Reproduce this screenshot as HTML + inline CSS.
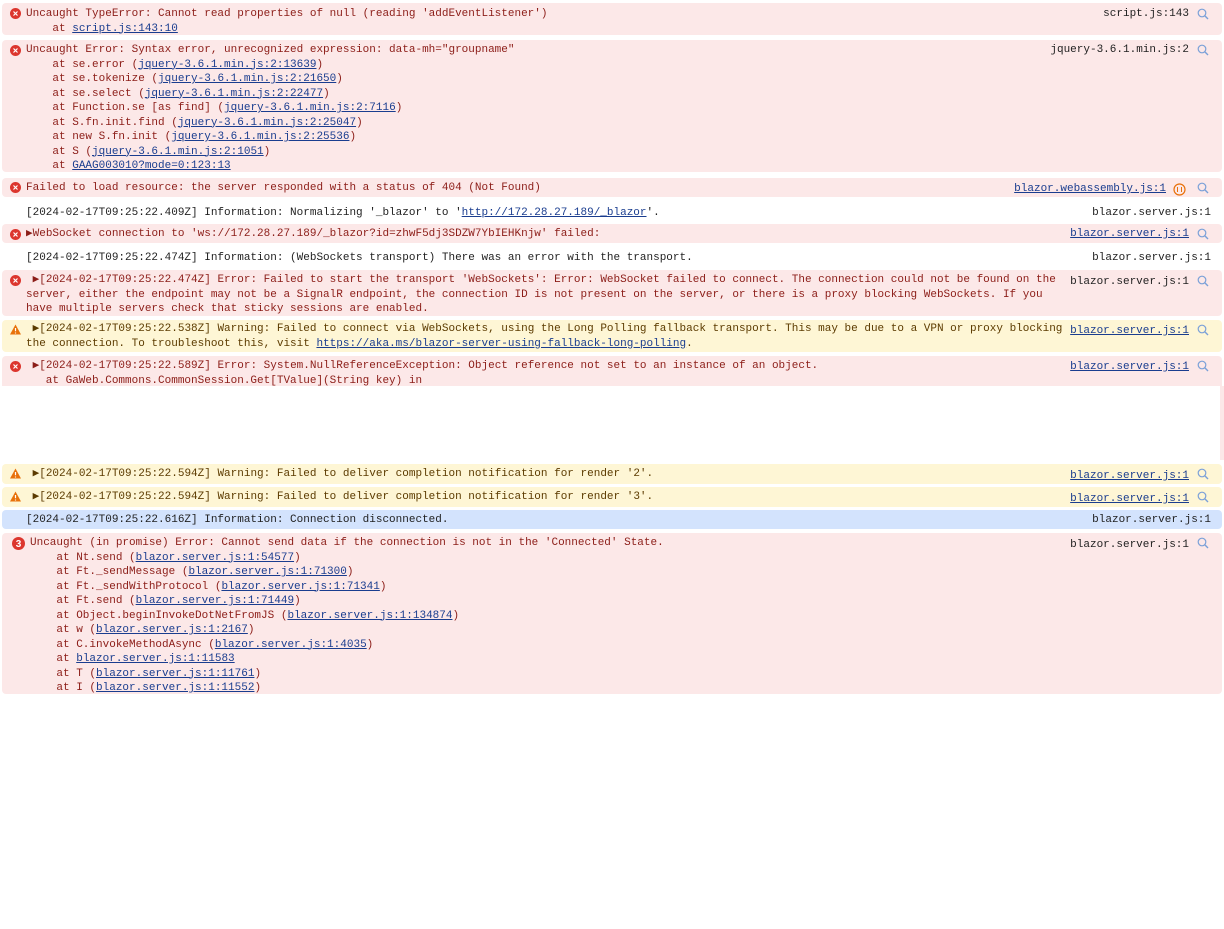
<!DOCTYPE html>
<html><head><meta charset="utf-8"><style>
body{margin:0;width:1224px;height:929px;background:#fff;position:relative;overflow:hidden;font-family:"Liberation Mono",monospace;font-size:11px;}
.r{position:absolute;left:2px;width:1220px;border-radius:4px;}
.e{background:#fce8e8;color:#8c1d18;}
.w{background:#fef6d5;color:#5c3b00;}
.b{background:#d3e3fd;color:#1f1f1f;}
.i{color:#1f1f1f;}
.t{position:absolute;left:24px;top:0;white-space:pre;line-height:14.5px;margin-top:1px}
.s{position:absolute;right:33px;white-space:pre;line-height:14.5px;color:#1f1f1f;margin-top:1px}
.s.u{text-decoration:underline;color:#1a3d8f}
.s.n{right:11px;color:#1f1f1f;text-decoration:none}
a{color:#1a3d8f;text-decoration:underline}
.ic{position:absolute;left:8px;width:11px;height:11px;margin-top:1px}
.mg{position:absolute;right:13px;width:12px;height:12px;margin-top:1px}
</style></head><body>
<svg width="0" height="0" style="position:absolute"><defs>
<g id="err"><circle cx="5.5" cy="5.5" r="5.5" fill="#dc362e"/><path d="M3.5 3.5l4 4M7.5 3.5l-4 4" stroke="#fff" stroke-width="1.2"/></g>
<g id="warn"><path d="M5.5 0.5L11 10.5H0z" fill="#e8710a"/><path d="M5.5 4v3.3M5.5 8.5v1" stroke="#fff" stroke-width="1.2"/></g>
<g id="mag"><circle cx="5" cy="5" r="3.8" fill="none" stroke="#7aa0d8" stroke-width="1.2"/><path d="M7.8 7.8L11 11" stroke="#7aa0d8" stroke-width="1.4"/></g>
</defs></svg>

<div class="r e" style="top:3px;height:32px">
<svg class="ic" style="top:4px"><use href="#err"/></svg>
<div class="t" style="top:3px">Uncaught TypeError: Cannot read properties of null (reading 'addEventListener')
    at <a>script.js:143:10</a></div>
<div class="s" style="top:3px">script.js:143</div><svg class="mg" style="top:4px"><use href="#mag"/></svg></div>

<div class="r e" style="top:40px;height:132px">
<svg class="ic" style="top:4px"><use href="#err"/></svg>
<div class="t" style="top:2px">Uncaught Error: Syntax error, unrecognized expression: data-mh="groupname"
    at se.error (<a>jquery-3.6.1.min.js:2:13639</a>)
    at se.tokenize (<a>jquery-3.6.1.min.js:2:21650</a>)
    at se.select (<a>jquery-3.6.1.min.js:2:22477</a>)
    at Function.se [as find] (<a>jquery-3.6.1.min.js:2:7116</a>)
    at S.fn.init.find (<a>jquery-3.6.1.min.js:2:25047</a>)
    at new S.fn.init (<a>jquery-3.6.1.min.js:2:25536</a>)
    at S (<a>jquery-3.6.1.min.js:2:1051</a>)
    at <a>GAAG003010?mode=0:123:13</a></div>
<div class="s" style="top:2px">jquery-3.6.1.min.js:2</div><svg class="mg" style="top:3px"><use href="#mag"/></svg></div>

<div class="r e" style="top:178px;height:19px">
<svg class="ic" style="top:3px"><use href="#err"/></svg>
<div class="t" style="top:2px">Failed to load resource: the server responded with a status of 404 (Not Found)</div>
<div class="s u" style="top:3px;right:56px">blazor.webassembly.js:1</div>
<svg style="position:absolute;right:36px;top:5px" width="13" height="13"><circle cx="6.5" cy="6.5" r="5.5" fill="none" stroke="#e8710a" stroke-width="1.2"/><path d="M4.5 4v5M8.5 4v5" stroke="#e8710a" stroke-width="1"/></svg>
<svg class="mg" style="top:3px"><use href="#mag"/></svg></div>

<div class="r i" style="top:202px;height:20px">
<div class="t" style="top:3px">[2024-02-17T09:25:22.409Z] Information: Normalizing '_blazor' to '<a>http://172.28.27.189/_blazor</a>'.</div>
<div class="s n" style="top:3px">blazor.server.js:1</div></div>

<div class="r e" style="top:224px;height:19px">
<svg class="ic" style="top:4px"><use href="#err"/></svg>
<div class="t" style="top:2px">▶WebSocket connection to 'ws://172.28.27.189/_blazor?id=zhwF5dj3SDZW7YbIEHKnjw' failed:</div>
<div class="s u" style="top:2px">blazor.server.js:1</div><svg class="mg" style="top:3px"><use href="#mag"/></svg></div>

<div class="r i" style="top:247px;height:20px">
<div class="t" style="top:3px">[2024-02-17T09:25:22.474Z] Information: (WebSockets transport) There was an error with the transport.</div>
<div class="s n" style="top:3px">blazor.server.js:1</div></div>

<div class="r e" style="top:270px;height:46px">
<svg class="ic" style="top:4px"><use href="#err"/></svg>
<div class="t" style="top:2px"> ▶[2024-02-17T09:25:22.474Z] Error: Failed to start the transport 'WebSockets': Error: WebSocket failed to connect. The connection could not be found on the
server, either the endpoint may not be a SignalR endpoint, the connection ID is not present on the server, or there is a proxy blocking WebSockets. If you
have multiple servers check that sticky sessions are enabled.</div>
<div class="s" style="top:4px;background:#fce8e8;padding-left:6px">blazor.server.js:1</div><svg class="mg" style="top:4px"><use href="#mag"/></svg></div>

<div class="r w" style="top:320px;height:32px">
<svg class="ic" style="top:3px"><use href="#warn"/></svg>
<div class="t" style="top:1px"> ▶[2024-02-17T09:25:22.538Z] Warning: Failed to connect via WebSockets, using the Long Polling fallback transport. This may be due to a VPN or proxy blocking
the connection. To troubleshoot this, visit <a>https://aka.ms/blazor-server-using-fallback-long-polling</a>.</div>
<div class="s u" style="top:3px;background:#fef6d5;padding-left:6px">blazor.server.js:1</div><svg class="mg" style="top:3px"><use href="#mag"/></svg></div>

<div class="r e" style="top:356px;height:30px;border-radius:4px 4px 0 0">
<svg class="ic" style="top:4px"><use href="#err"/></svg>
<div class="t" style="top:2px"> ▶[2024-02-17T09:25:22.589Z] Error: System.NullReferenceException: Object reference not set to an instance of an object.
   at GaWeb.Commons.CommonSession.Get[TValue](String key) in</div>
<div class="s u" style="top:3px">blazor.server.js:1</div><svg class="mg" style="top:3px"><use href="#mag"/></svg></div>
<div style="position:absolute;left:1220px;top:386px;width:4px;height:74px;background:#fce8e8"></div>

<div class="r w" style="top:464px;height:20px">
<svg class="ic" style="top:3px"><use href="#warn"/></svg>
<div class="t" style="top:2px"> ▶[2024-02-17T09:25:22.594Z] Warning: Failed to deliver completion notification for render '2'.</div>
<div class="s u" style="top:4px">blazor.server.js:1</div><svg class="mg" style="top:3px"><use href="#mag"/></svg></div>

<div class="r w" style="top:487px;height:20px">
<svg class="ic" style="top:3px"><use href="#warn"/></svg>
<div class="t" style="top:2px"> ▶[2024-02-17T09:25:22.594Z] Warning: Failed to deliver completion notification for render '3'.</div>
<div class="s u" style="top:4px">blazor.server.js:1</div><svg class="mg" style="top:3px"><use href="#mag"/></svg></div>

<div class="r b" style="top:510px;height:19px">
<div class="t" style="top:2px">[2024-02-17T09:25:22.616Z] Information: Connection disconnected.</div>
<div class="s n" style="top:2px">blazor.server.js:1</div></div>

<div class="r e" style="top:533px;height:161px">
<svg style="position:absolute;left:10px;top:4px" width="13" height="13"><circle cx="6.5" cy="6.5" r="6.5" fill="#dc362e"/><text x="6.5" y="10" fill="#fff" font-size="10" font-weight="bold" text-anchor="middle" font-family="Liberation Sans">3</text></svg>
<div class="t" style="top:2px;left:28px">Uncaught (in promise) Error: Cannot send data if the connection is not in the 'Connected' State.
    at Nt.send (<a>blazor.server.js:1:54577</a>)
    at Ft._sendMessage (<a>blazor.server.js:1:71300</a>)
    at Ft._sendWithProtocol (<a>blazor.server.js:1:71341</a>)
    at Ft.send (<a>blazor.server.js:1:71449</a>)
    at Object.beginInvokeDotNetFromJS (<a>blazor.server.js:1:134874</a>)
    at w (<a>blazor.server.js:1:2167</a>)
    at C.invokeMethodAsync (<a>blazor.server.js:1:4035</a>)
    at <a>blazor.server.js:1:11583</a>
    at T (<a>blazor.server.js:1:11761</a>)
    at I (<a>blazor.server.js:1:11552</a>)</div>
<div class="s" style="top:4px">blazor.server.js:1</div><svg class="mg" style="top:3px"><use href="#mag"/></svg></div>
</body></html>
